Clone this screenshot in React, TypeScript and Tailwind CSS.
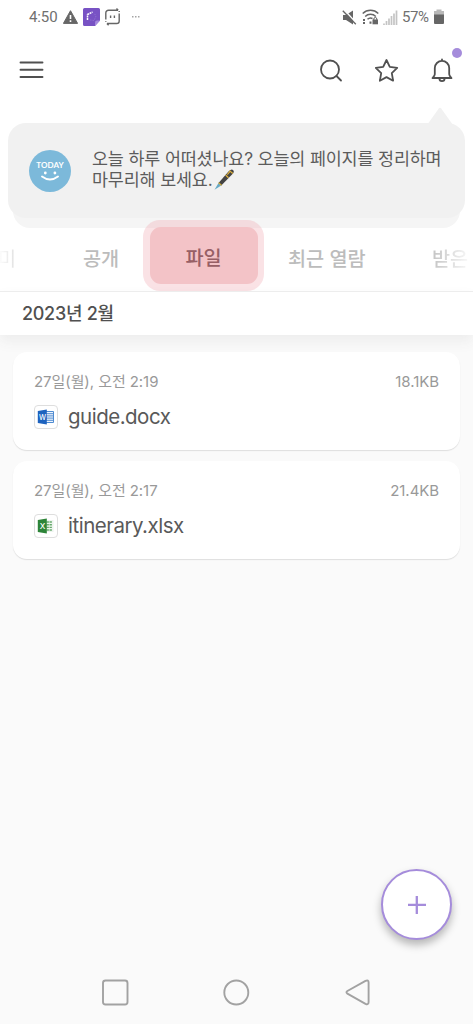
import type { ReactNode } from 'react';

interface FileItem {
  name: string;
  date: string;
  size: string;
  type: 'word' | 'excel';
}

const files: FileItem[] = [
  { name: 'guide.docx', date: '27일(월), 오전 2:19', size: '18.1KB', type: 'word' },
  { name: 'itinerary.xlsx', date: '27일(월), 오전 2:17', size: '21.4KB', type: 'excel' },
];

function StatusBar() {
  return (
    <div className="flex h-[34px] shrink-0 items-center justify-between pr-[29px] pl-[29px] font-[Roboto,sans-serif] text-[15px] text-[#707070]">
      <div className="flex items-center">
        <span className="w-[34px] tracking-[-0.1px]">4:50</span>
        <svg width="15" height="14" viewBox="0 0 15 14">
          <path d="M7.5 .7 14.6 13.4H.4Z" fill="#666" stroke="#666" strokeLinejoin="round" />
          <path d="M7.5 5v4M7.5 10.3v1.6" stroke="#fff" strokeWidth="1.6" />
        </svg>
        <svg className="ml-[5px]" width="17" height="18" viewBox="0 0 17 18">
          <path d="M1.5 0h14A1.5 1.5 0 0 1 17 1.5V12.5L12 18H1.5A1.5 1.5 0 0 1 0 16.5v-15A1.5 1.5 0 0 1 1.5 0Z" fill="#7852c4" />
          <path d="M12 18v-3.5a2 2 0 0 1 2-2h3Z" fill="#a58add" />
          <path d="M4.5 12V6.5L9.5 4" fill="none" stroke="#fff" strokeWidth="1.5" strokeDasharray="2 .6" />
          <path d="M7 12l4 .5L13 8l-2-3" fill="none" stroke="#8d6dd0" strokeWidth="1" strokeDasharray="1.5 1" />
        </svg>
        <svg className="ml-[5px]" width="15" height="18" viewBox="0 0 15 18" fill="none" stroke="#666" strokeWidth="1.4">
          <path d="M.8 11.5V5a2.7 2.7 0 0 1 2.7-2.7H13M11.5 .6l1.7 1.7M14.2 5.5V13a2.5 2.5 0 0 1-2.5 2.5H2M3.6 17.2l-1.7-1.7M.8 13v.8M14.2 3v1" />
          <path d="M5.6 7.5V10M9.4 7.5V10" />
        </svg>
        <svg className="ml-[12px]" width="8" height="2" viewBox="0 0 8 2" fill="#a5a5a5">
          <rect width="1.5" height="1.5" />
          <rect x="3" width="1.5" height="1.5" />
          <rect x="6" width="1.5" height="1.5" />
        </svg>
      </div>
      <div className="flex items-center">
        <svg width="15" height="15" viewBox="0 0 15 15">
          <path d="M1 5h3l7-4.5v14L4 10H1Z" fill="#666" />
          <path d="M2.3 0l12 13" stroke="#fff" strokeWidth="1.5" />
          <path d="M.8 .8l13 13.4" stroke="#666" strokeWidth="1.3" />
        </svg>
        <svg className="ml-[5px]" width="17" height="16" viewBox="0 0 17 16" fill="none" stroke="#666" strokeWidth="1.5">
          <path d="M.7 4.5a11 11 0 0 1 15.6 0M3.2 7.5a7.5 7.5 0 0 1 10.6 0M5.5 10.3a4.4 4.4 0 0 1 5-.8" />
          <path d="M2 10v2M2 13v2M8.5 12.5v2.3" strokeWidth="2" />
          <path d="M11.8 11v-1a1.5 1.5 0 0 1 3 0v1" strokeWidth="1" />
          <rect x="10.5" y="10.5" width="5.5" height="4.8" fill="#666" stroke="none" />
        </svg>
        <svg className="ml-[4px]" width="15" height="15" viewBox="0 0 15 15" stroke="#c4c4c4" strokeWidth="1.7">
          <path d="M1 13.5V15M3.5 11V15M6 8.5V15M8.5 6V15M11 3.5V15M13.5 .5V15" />
        </svg>
        <span className="ml-[4px] w-[32px] tracking-[-0.4px]">57%</span>
        <svg width="10" height="16" viewBox="0 0 10 16">
          <path d="M2.5 .5h5V2H10v4H0V2h2.5Z" fill="#b9b9b9" />
          <path d="M0 5.5h10V14a1 1 0 0 1-1 1H1a1 1 0 0 1-1-1Z" fill="#666" />
        </svg>
      </div>
    </div>
  );
}

function Toolbar() {
  return (
    <header className="flex h-[73px] shrink-0 items-center justify-between pr-[19px] pb-[2px] pl-[19px]">
      <svg width="25" height="18" viewBox="0 0 25 18" stroke="#505050" strokeWidth="1.9" strokeLinecap="round">
        <path d="M1.5 1.5h22M1.5 8.8h22M1.5 16h22" />
      </svg>
      <div className="flex items-center gap-[31.5px]">
        <svg width="24" height="24" viewBox="0 0 24 24" fill="none" stroke="#505050" strokeWidth="1.8" strokeLinecap="round">
          <circle cx="11" cy="11.5" r="9" />
          <path d="m17.5 18 4.5 4.500" />
        </svg>
        <svg width="24" height="24" viewBox="0 0 24 24" fill="none" stroke="#505050" strokeWidth="1.8" strokeLinejoin="round">
          <path d="m11.5 2 3.300 6.900 7.400 1-5.400 5.200 1.300 7.600-6.600-3.600-6.600 3.600 1.300-7.600-5.400-5.200 7.400-1Z" />
        </svg>
        <div className="relative">
          <svg width="24" height="24" viewBox="0 0 24 24" fill="none" stroke="#505050" strokeWidth="1.8" strokeLinecap="round" strokeLinejoin="round">
            <path d="M12 1.500v1M4.800 16.300v-6.200a7.200 7.200 0 0 1 14.400 0v6.200q0 1.300 2.300 3.700h-19q2.300-2.400 2.300-3.700Z" />
            <path d="M9.400 20.500a2.600 2.600 0 0 0 5.200 0" />
          </svg>
          <span className="absolute top-[-10px] right-[-8px] size-[10px] rounded-full bg-[#a58cdb]" />
        </div>
      </div>
    </header>
  );
}

function TodayBubble() {
  return (
    <section className="relative mx-2 mt-4 h-[95px] shrink-0">
      <div className="absolute inset-x-[5px] top-[60px] h-[45px] rounded-b-[17px] bg-[#f5f5f5]" />
      <svg className="absolute top-[-16px] right-[12px]" width="26" height="18" viewBox="0 0 26 18" fill="#f1f1f1">
        <path d="M0 18 11.8 1.5q1.2-1.3 2.4 0L26 18Z" />
      </svg>
      <div className="relative flex h-full items-center rounded-[18px] bg-[#f1f1f1] pl-[21px]">
        <div className="flex size-[42px] shrink-0 flex-col items-center rounded-full bg-[#7cb9da] pt-[11px] text-white">
          <span className="font-[Lato,sans-serif] text-[8px] leading-[9px] font-bold tracking-[0.1px]">TODAY</span>
          <svg className="mt-px" width="20" height="11" viewBox="0 0 20 11">
            <circle cx="5.3" cy="2" r="1.4" fill="#fff" />
            <circle cx="14.9" cy="2" r="1.4" fill="#fff" />
            <path d="M2 5.5q8 6 16 0" fill="none" stroke="#fff" strokeWidth="1.9" strokeLinecap="round" />
          </svg>
        </div>
        <p className="ml-[21px] pb-[3px] text-[17.4px] leading-[21px] tracking-[-0.15px] whitespace-nowrap text-[#5c5c5c]">
          오늘 하루 어떠셨나요? 오늘의 페이지를 정리하며
          <br />
          마무리해 보세요.
          <svg className="ml-px inline-block align-[-4px]" width="20" height="21" viewBox="0 0 20 21">
            <path d="M4.5 14 14.5 2.5Q17.5 -.3 19 1t0 3.5L7.3 16.5Z" fill="#444" />
            <path d="m4.5 14 2.8 2.5L.5 20.7Z" fill="#65a9c5" />
            <path d="m5 13.3 3 2.6-.9.9-2.9-2.5Z" fill="#d9ac35" />
            <path d="m11.6 6 2.9 2.7M15.5 1.6l3.3 2.9M13.3 5.6l2.9-3.4" fill="none" stroke="#dfb13c" strokeWidth="1.2" />
          </svg>
        </p>
      </div>
    </section>
  );
}

function Tabs() {
  return (
    <nav className="relative flex h-[74px] shrink-0 items-end border-b border-[#ededed] text-[19.7px] font-medium whitespace-nowrap text-[#bcbcbc]">
      <span className="ml-[-2px] h-[46px] w-[85px] bg-linear-to-r from-white to-[#dcdcdc] to-[20px] bg-clip-text leading-[28px] font-normal text-transparent">미</span>
      <span className="h-[46px] w-[60px] leading-[28px]">공개</span>
      <div className="relative flex h-[71px] w-[121px] shrink-0 items-center justify-center rounded-[17px] bg-[#ed9ea8]/30">
        <span className="flex h-[57px] w-[108px] items-center justify-center rounded-[11px] bg-[#f3c3c7] pt-[6px] text-[#975f65]">파일</span>
      </div>
      <span className="ml-[24px] h-[46px] w-[144px] leading-[28px]">최근 열람</span>
      <span className="h-[46px] w-[37px] bg-linear-to-r from-[#c4c4c4] to-[#f8f8f8] bg-clip-text leading-[28px] text-transparent">받은</span>
    </nav>
  );
}

function FileIcon({ type }: { type: FileItem['type'] }) {
  const color = type === 'word' ? '#1d63bf' : '#2d8438';
  return (
    <span className="flex size-[24px] items-center justify-center rounded-[4px] border border-[#dedede] bg-white">
      <svg width="18" height="16" viewBox="0 0 18 16">
        <rect x="8" y="2" width="8.5" height="12" fill={type === 'word' ? '#edf4fc' : '#eef4ef'} />
        {type === 'word' ? (
          <path d="M9 2.5h7.500v11H9M9 4.700h7.500M9 6.900h7.500M9 9.100h7.500M9 11.300h7.500" fill="none" stroke="#4f8bd1" strokeWidth="1" />
        ) : (
          <path d="M9.500 4h5.500M9.500 6.700h5.500M9.500 9.400h5.500M9.500 12h5.500" stroke="#67aa6d" strokeWidth="1.4" strokeDasharray="2.4 .6" />
        )}
        <path d="m.8 2 9-1.4v14.8l-9-1.4Z" fill={color} />
        <text x="5.2" y="10.8" textAnchor="middle" fill="#fff" fontFamily="Inter, sans-serif" fontSize={type === 'word' ? 7 : 8} fontWeight="500">
          {type === 'word' ? 'W' : 'X'}
        </text>
      </svg>
    </span>
  );
}

function FileCard({ file }: { file: FileItem }) {
  return (
    <article className="h-[98px] rounded-[14px] bg-white px-[21px] pt-[19px] shadow-[0_1px_1px_#dedede]">
      <div className="flex h-[22px] items-center justify-between text-[15px] tracking-[-0.07px] text-[#999]">
        <span>{file.date}</span>
        <span>{file.size}</span>
      </div>
      <div className="mt-[11px] flex h-[26px] items-center gap-[10px] text-[20.5px] tracking-[-0.5px] text-[#595959]">
        <FileIcon type={file.type} />
        <span>{file.name}</span>
      </div>
    </article>
  );
}

function NavButton({ children }: { children: ReactNode }) {
  return (
    <svg width="28" height="28" viewBox="0 0 28 28" fill="none" stroke="#a2a2a2" strokeWidth="1.9" strokeLinejoin="round">
      {children}
    </svg>
  );
}

export default function App() {
  return (
    <div className="relative flex h-[1024px] w-[473px] flex-col overflow-hidden bg-[#fafafa] font-[Inter,'Noto_Sans_CJK_KR',sans-serif]">
      <div className="flex shrink-0 flex-col bg-white">
        <StatusBar />
        <Toolbar />
        <TodayBubble />
        <Tabs />
      </div>
      <h2 className="flex h-[43px] shrink-0 items-center bg-white pl-[22px] text-[18px] font-medium tracking-[-0.3px] text-[#505050] shadow-[0_6px_14px_#ececec]">
        2023년 2월
      </h2>
      <main className="mt-[17px] flex flex-1 flex-col gap-[11px] px-[13px]">
        {files.map((file) => (
          <FileCard key={file.name} file={file} />
        ))}
      </main>
      <button className="absolute top-[869px] left-[381px] flex size-[71px] items-center justify-center rounded-full border-2 border-[#a58cdb] bg-white shadow-[0_5px_9px_rgba(0,0,0,0.28)]">
        <svg width="18" height="18" viewBox="0 0 18 18" stroke="#a58cdb" strokeWidth="2.3">
          <path d="M8.8 0v18M0 8.8h18" />
        </svg>
      </button>
      <div className="flex h-[64px] shrink-0 items-center justify-between px-[101px]">
        <NavButton>
          <rect x="2" y="2.5" width="24.5" height="24" rx="2.5" />
        </NavButton>
        <NavButton>
          <circle cx="13.3" cy="14.5" r="12" />
        </NavButton>
        <NavButton>
          <path d="M3.4 13 21.5 2.8Q24.6 1.6 24.6 4.4V24Q24.6 27.200 21.500 25.800L3.400 15.700Q1.500 14.300 3.400 13Z" />
        </NavButton>
      </div>
    </div>
  );
}
